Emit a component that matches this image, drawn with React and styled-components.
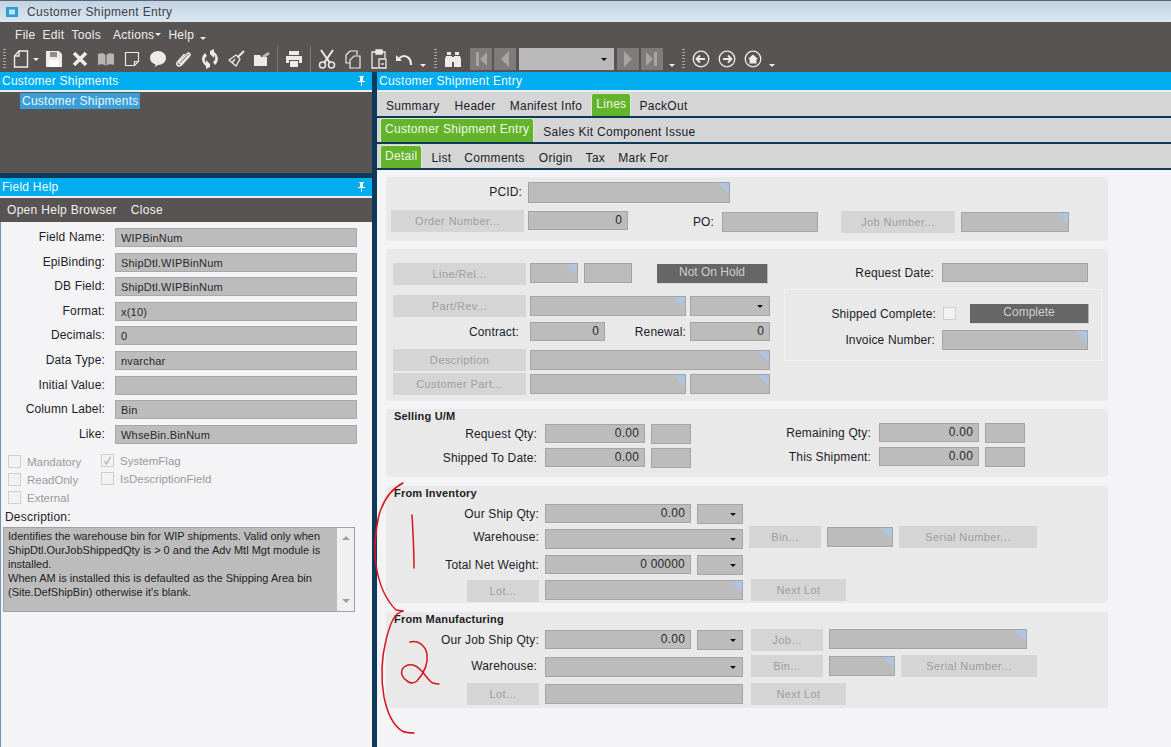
import React from 'react';
import styled, {createGlobalStyle} from 'styled-components';

const GlobalStyle = createGlobalStyle`
  html, body {
    margin: 0;
    padding: 0;
    background: #f4f4f6;
  }
  * {
    box-sizing: border-box;
  }
`;

const Page = styled.div`
  position: relative;
  width: 1171px;
  height: 747px;
  overflow: hidden;
  font-family: "Liberation Sans", Arial, sans-serif;
  font-size: 12px;
  color: #1c1c28;
  background: #f4f4f6;
`;

const TitleBar = styled.div`
  height: 22px;
  display: flex;
  align-items: center;
  gap: 9px;
  padding-left: 6px;
  border-top: 1px solid #5c6670;
  background: linear-gradient(180deg, #c2d2e2 0%, #dce6ef 100%);
  color: #3c4048;
  font-size: 12px;
  letter-spacing: 0.35px;
`;

const MenuBand = styled.div`
  height: 50px;
  background: #585453;
  color: #eeeeee;
`;

const MenuRow = styled.div`
  height: 24px;
  display: flex;
  align-items: center;
  padding-top: 1px;
  letter-spacing: 0.3px;
`;

const MenuItem = styled.span`
  margin-left: ${p => p.$ml}px;
`;

const ToolRow = styled.div`
  height: 26px;
  display: flex;
  align-items: flex-start;
`;

const Slot = styled.div`
  width: ${p => p.$w}px;
  height: 24px;
  margin-top: 1px;
  flex: none;
  display: flex;
  align-items: center;
  justify-content: center;
`;

const Grip = styled.div`
  width: 3px;
  height: 20px;
  background: repeating-linear-gradient(180deg, #a9a7a6 0 1px, transparent 1px 3px);
`;

const Sep = styled.div`
  width: 1px;
  height: 26px;
  margin-left: ${p => p.$ml || 0}px;
  margin-right: ${p => p.$mr || 0}px;
  flex: none;
  background: #7c7978;
`;

const NavBox = styled.div`
  width: 22px;
  height: 22px;
  margin-left: ${p => p.$ml}px;
  margin-top: 2px;
  flex: none;
  display: flex;
  align-items: center;
  justify-content: center;
  background: #7e7b7a;
`;

const NavCombo = styled.div`
  width: 95px;
  height: 22px;
  margin-left: 3px;
  margin-top: 2px;
  flex: none;
  display: flex;
  align-items: center;
  justify-content: flex-end;
  padding-right: 7px;
  background: #b9b9b9;
`;

const Caret = styled.i`
  display: block;
  width: 0;
  height: 0;
  border-left: 3px solid transparent;
  border-right: 3px solid transparent;
  border-top: 3px solid ${p => p.$c || '#111'};
`;

const LowCaret = styled(Caret)`
  margin-top: ${p => p.$mt || 0}px;
`;

const Main = styled.div`
  display: flex;
  height: 675px;
  background: #0e3a5a;
`;

const LeftColumn = styled.div`
  width: 372px;
  flex: none;
  display: flex;
  flex-direction: column;
`;

const RightColumn = styled.div`
  width: 794px;
  margin-left: 5px;
  flex: none;
  display: flex;
  flex-direction: column;
`;

const DockHeader = styled.div`
  height: 18px;
  flex: none;
  display: flex;
  align-items: center;
  justify-content: space-between;
  padding: 0 6px 0 2px;
  background: #00adef;
  color: #f2fbff;
  font-size: 12px;
  letter-spacing: 0.25px;
`;

const WhiteLine = styled.div`
  height: 2px;
  flex: none;
  background: #ececec;
`;

const TreePane = styled.div`
  height: 81px;
  flex: none;
  padding: 1px 0 0 20px;
  background: #585453;
  margin-bottom: 5px;
`;

const TreeSelected = styled.span`
  display: inline-block;
  height: 16px;
  line-height: 16px;
  padding: 0 1px 0 2px;
  background: #3a9fd8;
  color: #e9f5fb;
  letter-spacing: 0.25px;
`;

const HelpMenu = styled.div`
  height: 24px;
  flex: none;
  display: flex;
  align-items: center;
  gap: 14px;
  padding-left: 7px;
  background: #585453;
  color: #f0f0f0;
  letter-spacing: 0.3px;
`;

const HelpBody = styled.div`
  flex: 1;
  padding: 6px 0 0 0;
  background: #f4f4f6;
  border-left: 1px solid #6f93b5;
`;

const HelpGrid = styled.div`
  display: grid;
  grid-template-columns: 104px 242px;
  column-gap: 10px;
  row-gap: 5.6px;
  align-items: center;
`;

const HelpLabel = styled.div`
  text-align: right;
  line-height: 19px;
  letter-spacing: 0.15px;
`;

const HelpValue = styled.div`
  height: 19px;
  line-height: 19px;
  padding-left: 5px;
  background: #bcbcbc;
  border: 1px solid #a8a8a8;
  font-size: 11px;
  color: #2a2a2a;
  letter-spacing: 0.2px;
`;

const FlagGrid = styled.div`
  display: grid;
  grid-template-columns: 93px 1fr;
  grid-auto-rows: 18px;
  width: 300px;
  margin: 9px 0 0 7px;
`;

const Flag = styled.div`
  display: flex;
  align-items: center;
  gap: 6px;
  font-size: 11.5px;
  color: #9a9a9a;
  transform: translateY(${p => p.$up ? -1 : 0}px);
`;

const Box = styled.span`
  width: 13px;
  height: 13px;
  flex: none;
  display: flex;
  align-items: center;
  justify-content: center;
  border: 1px solid #cfcfcf;
  background: #f2f2f2;
  margin-left: ${p => p.$ml || 0}px;
  margin-top: ${p => p.$mt || 0}px;
`;

const DescLabel = styled.div`
  margin: 2px 0 0 4px;
  line-height: 16px;
  letter-spacing: 0.2px;
`;

const DescBox = styled.div`
  width: 352px;
  height: 85px;
  margin: 2px 0 0 2px;
  display: flex;
  background: #bcbcbc;
  border: 1px solid #a0a0a0;
`;

const DescText = styled.div`
  flex: 1;
  padding: 1px 0 0 4px;
  font-size: 11px;
  line-height: 14px;
  color: #222;
  white-space: nowrap;
`;

const ScrollTrack = styled.div`
  width: 17px;
  flex: none;
  display: flex;
  flex-direction: column;
  justify-content: space-between;
  align-items: center;
  padding: 8px 0;
  background: #f0f0f0;
`;

const ScrollUp = styled.i`
  display: block;
  width: 0;
  height: 0;
  border-left: 4px solid transparent;
  border-right: 4px solid transparent;
  border-bottom: 4px solid #a0a0a0;
`;

const ScrollDown = styled.i`
  display: block;
  width: 0;
  height: 0;
  border-left: 4px solid transparent;
  border-right: 4px solid transparent;
  border-top: 4px solid #a0a0a0;
`;

const TabRow = styled.div`
  height: ${p => p.$h}px;
  flex: none;
  display: flex;
  align-items: flex-end;
  margin-bottom: 2px;
  padding-left: 3px;
  background: #d5d5d5;
  letter-spacing: 0.3px;
`;

const Tab = styled.div`
  margin-left: ${p => p.$ml || 0}px;
  height: ${p => p.$h || 22}px;
  line-height: ${p => p.$active ? 20 : 24}px;
  padding: 0 ${p => p.$active ? 4 : 0}px;
  ${p => p.$active && `
    background: #63b32c;
    color: #eef8e6;
    border: 1px solid #d8ecc8;
    border-bottom: 0;
    border-radius: 3px 3px 0 0;
  `}
`;

const FormArea = styled.div`
  flex: 1;
  padding: 7px 0 0 9px;
  background: #f4f4f6;
  display: flex;
  flex-direction: column;
`;

const Panel = styled.div`
  width: 722px;
  height: ${p => p.$h}px;
  margin-bottom: ${p => p.$mb}px;
  flex: none;
  padding-top: ${p => p.$pt || 0}px;
  border-radius: 4px;
  background: #e9e9e9;
`;

const PanelTitle = styled.div`
  height: ${p => p.$h || 14}px;
  line-height: 14px;
  padding-left: 8px;
  font-size: 11px;
  font-weight: bold;
  color: #222;
  letter-spacing: 0.2px;
`;

const Row = styled.div`
  display: flex;
  align-items: flex-start;
  margin-top: ${p => p.$mt || 0}px;
  padding-left: ${p => p.$pl || 0}px;
`;

const Split = styled.div`
  display: flex;
  align-items: flex-start;
`;

const Stack = styled.div`
  display: flex;
  flex-direction: column;
  width: ${p => p.$w}px;
  flex: none;
  margin-left: ${p => p.$ml || 0}px;
`;

const Label = styled.div`
  width: ${p => p.$w}px;
  margin-top: ${p => p.$mt || 0}px;
  flex: none;
  text-align: right;
  line-height: 20px;
  letter-spacing: 0.15px;
  white-space: nowrap;
`;

const Field = styled.div`
  width: ${p => p.$w}px;
  height: ${p => p.$h || 20}px;
  margin-left: ${p => p.$ml || 0}px;
  margin-top: ${p => p.$mt || 0}px;
  padding-right: 5px;
  flex: none;
  text-align: right;
  line-height: ${p => (p.$h || 20) - 3}px;
  color: #2a2a2a;
  letter-spacing: 0.2px;
  border: 1px solid #a4a4a4;
  background: ${p => p.$corner
    ? 'linear-gradient(225deg, #afc4e0 8px, #bcbcbc 8px)'
    : '#bcbcbc'};
`;

const Select = styled.div`
  width: ${p => p.$w}px;
  height: 20px;
  margin-left: ${p => p.$ml || 0}px;
  margin-top: ${p => p.$mt || 0}px;
  padding-right: 6px;
  flex: none;
  display: flex;
  align-items: center;
  justify-content: flex-end;
  border: 1px solid #a4a4a4;
  background: #bcbcbc;
`;

const Btn = styled.div`
  width: ${p => p.$w}px;
  height: 22px;
  margin-left: ${p => p.$ml || 0}px;
  margin-top: ${p => p.$mt || 0}px;
  flex: none;
  text-align: center;
  line-height: 22px;
  font-size: 11px;
  letter-spacing: 0.4px;
  color: #9d9d9d;
  background: #d5d5d5;
  white-space: nowrap;
`;

const DarkBtn = styled.div`
  width: ${p => p.$w}px;
  height: 20px;
  margin-left: ${p => p.$ml || 0}px;
  margin-top: ${p => p.$mt || 0}px;
  flex: none;
  text-align: center;
  line-height: 17px;
  color: #cfcfcf;
  background: #666666;
  border-right: 1px solid #b5b5b5;
  border-bottom: 1px solid #d8d8d8;
`;

const GroupBox = styled.div`
  width: 318px;
  height: 72px;
  margin-top: 6px;
  padding-top: 14px;
  border: 1px solid #f3f3f3;
`;

const Scribble = styled.svg`
  position: absolute;
  left: 0;
  top: 0;
  pointer-events: none;
`;

const ink = '#ecebea';

const Doc = () => (
  <svg width="16" height="20" viewBox="0 0 16 20" fill="none" stroke={ink} strokeWidth="1.4">
    <path d="M6 2h8.5v16h-13V7z"/><path d="M6 2v5H1.500"/>
  </svg>
);
const Save = () => (
  <svg width="18" height="18" viewBox="0 0 18 18" fill={ink}>
    <path d="M1 1h13l3 3v13H1z"/><path d="M5 2h7v5H5z" fill="#8f8c8b"/><path d="M4 10h10v7H4z" fill="#fff"/>
  </svg>
);
const Cross = () => (
  <svg width="16" height="16" viewBox="0 0 16 16" stroke={ink} strokeWidth="3.600">
    <path d="M2 2l12 12M14 2L2 14"/>
  </svg>
);
const Book = () => (
  <svg width="18" height="16" viewBox="0 0 18 16" fill="#b7b5b4">
    <path d="M1 3c3-1 6-1 7.500 1v11C7 13 4 13 1 14zM17 3c-3-1-6-1-7.500 1v11c1.500-2 4.500-2 7.500-1z"/>
  </svg>
);
const Note = () => (
  <svg width="16" height="16" viewBox="0 0 16 16" fill="none" stroke={ink} strokeWidth="1.200">
    <path d="M1.500 1.500h13v9l-4 4h-9z"/><path d="M10.500 14.500v-4h4"/>
  </svg>
);
const Bubble = () => (
  <svg width="18" height="18" viewBox="0 0 18 18" fill={ink}>
    <path d="M9 1c4.500 0 8 3 8 7s-3.500 7-8 7l-3 2 .5-2.600C3 13.300 1 11 1 8c0-4 3.500-7 8-7z"/>
  </svg>
);
const Clip = () => (
  <svg width="18" height="18" viewBox="0 0 18 18" fill="none" stroke={ink} strokeWidth="1.500">
    <path d="M14 5l-8 8.500c-1 1-2.500-.5-1.500-1.500L12 4c2-2 4 0 2.500 2l-8 9c-3 2.500-6-.5-4-3l7-8"/>
  </svg>
);
const Sync = () => (
  <svg width="18" height="20" viewBox="0 0 18 20" fill={ink}>
    <path d="M9 2l4-2v3a8 8 0 0 1 1 13l-2-3a4.500 4.500 0 0 0 1-7v3L9 5z"/>
    <path d="M9 18l-4 2v-3a8 8 0 0 1-1-13l2 3a4.500 4.500 0 0 0-1 7v-3l4 4z"/>
  </svg>
);
const Broom = () => (
  <svg width="18" height="18" viewBox="0 0 18 18" fill="none" stroke={ink} strokeWidth="1.300">
    <path d="M17 1l-6 6" strokeWidth="2"/><path d="M9 5l4 4-4 7-7-6z"/><path d="M5 13l3-4"/>
  </svg>
);
const FolderTool = () => (
  <svg width="18" height="16" viewBox="0 0 18 16" fill={ink}>
    <path d="M1 4h6l1 2h6v9H1z"/><path d="M9 5l6-4 2 2-6 4z" fill="#bdbbba"/>
  </svg>
);
const Printer = () => (
  <svg width="18" height="16" viewBox="0 0 18 16" fill={ink}>
    <path d="M4 0h10v4H4z"/><path d="M1 5h16v7h-3V9H4v3H1z"/><path d="M5 10h8v6H5z"/>
  </svg>
);
const Scissors = () => (
  <svg width="18" height="20" viewBox="0 0 18 20" fill="none" stroke={ink} strokeWidth="1.500">
    <path d="M3 1l9 13M15 1L6 14" strokeWidth="2"/><circle cx="4.500" cy="16" r="3"/><circle cx="13.500" cy="16" r="3"/>
  </svg>
);
const Copy = () => (
  <svg width="16" height="19" viewBox="0 0 16 19" fill="none" stroke={ink} strokeWidth="1.200">
    <path d="M5 1h7v4M5 1L1 5v8h4"/><path d="M9 6h6v12H5V10z"/>
  </svg>
);
const Paste = () => (
  <svg width="16" height="20" viewBox="0 0 16 20" fill="none" stroke={ink} strokeWidth="1.300">
    <path d="M5 3H1v16h6M11 3h3v6"/><path d="M5 1h6v4H5z" fill={ink}/><path d="M8 10h7v9H8z"/><path d="M10 15h3" />
  </svg>
);
const Undo = () => (
  <svg width="18" height="14" viewBox="0 0 18 14" fill="none" stroke={ink} strokeWidth="2.200">
    <path d="M16 13c0-6-3-9-7-9-2 0-3.500 1-5 2.500"/><path d="M1 3v6h6z" fill={ink} stroke="none"/>
  </svg>
);
const Binoculars = () => (
  <svg width="18" height="17" viewBox="0 0 18 17" fill={ink}>
    <path d="M3 1h4v3H3zM11 1h4v3h-4z"/><path d="M2 5h6v11H1V8zM10 5h6l1 3v8h-7z"/><path d="M8 6h2v5H8z"/>
  </svg>
);
const NavGlyph = ({d}) => (
  <svg width="14" height="16" viewBox="0 0 14 16" fill="#a7a5a4"><path d={d}/></svg>
);
const Circled = ({children}) => (
  <svg width="18" height="18" viewBox="0 0 18 18" fill="none" stroke={ink} strokeWidth="1.300">
    <circle cx="9" cy="9" r="7.800"/>{children}
  </svg>
);
const Check = () => (
  <svg width="11" height="11" viewBox="0 0 11 11" fill="none" stroke="#b0b0b0" strokeWidth="1.300">
    <path d="M2.500 6l2 3 4-7"/>
  </svg>
);
const Pin = () => (
  <svg width="9" height="10" viewBox="0 0 9 10" fill="#f2fbff">
    <path d="M2 0h5v1H6v4h2v1H5v4H4V6H1V5h2V1H2z"/>
  </svg>
);
const AppIcon = () => (
  <svg width="12" height="12" viewBox="0 0 12 12">
    <path d="M0 1h12v10H0z" fill="#2d9bd8"/><path d="M3 3.500h6v5H3z" fill="#bfe3f6"/>
  </svg>
);

const helpFields = [
  ['Field Name:', 'WIPBinNum'],
  ['EpiBinding:', 'ShipDtl.WIPBinNum'],
  ['DB Field:', 'ShipDtl.WIPBinNum'],
  ['Format:', 'x(10)'],
  ['Decimals:', '0'],
  ['Data Type:', 'nvarchar'],
  ['Initial Value:', ''],
  ['Column Label:', 'Bin'],
  ['Like:', 'WhseBin.BinNum'],
];

const App = () => {
  return (
    <Page>
      <GlobalStyle/>
      <TitleBar><AppIcon/>Customer Shipment Entry</TitleBar>
      <MenuBand>
        <MenuRow>
          <MenuItem $ml={15}>File</MenuItem>
          <MenuItem $ml={7}>Edit</MenuItem>
          <MenuItem $ml={7}>Tools</MenuItem>
          <MenuItem $ml={12}>Actions</MenuItem>
          <MenuItem $ml={1}><Caret $c="#eee"/></MenuItem>
          <MenuItem $ml={7}>Help</MenuItem>
          <MenuItem $ml={6}><LowCaret $c="#eee" $mt={8}/></MenuItem>
        </MenuRow>
        <ToolRow>
          <Slot $w={9}><Grip/></Slot>
          <Slot $w={23}><Doc/></Slot>
          <Slot $w={8}><Caret $c="#eee"/></Slot>
          <Slot $w={28}><Save/></Slot>
          <Slot $w={24}><Cross/></Slot>
          <Slot $w={28}><Book/></Slot>
          <Slot $w={24}><Note/></Slot>
          <Slot $w={28}><Bubble/></Slot>
          <Slot $w={24}><Clip/></Slot>
          <Slot $w={28}><Sync/></Slot>
          <Slot $w={24}><Broom/></Slot>
          <Slot $w={28}><FolderTool/></Slot>
          <Sep $ml={1}/>
          <Slot $w={32}><Printer/></Slot>
          <Sep/>
          <Slot $w={31}><Scissors/></Slot>
          <Slot $w={22}><Copy/></Slot>
          <Slot $w={30}><Paste/></Slot>
          <Slot $w={20}><Undo/></Slot>
          <Slot $w={18}><LowCaret $c="#eee" $mt={13}/></Slot>
          <Slot $w={6}><Grip/></Slot>
          <Slot $w={30}><Binoculars/></Slot>
          <NavBox $ml={2}><NavGlyph d="M2 1h3v14H2zM13 1v14L6 8z"/></NavBox>
          <NavBox $ml={2}><NavGlyph d="M11 0v16L3 8z"/></NavBox>
          <NavCombo><Caret/></NavCombo>
          <NavBox $ml={3}><NavGlyph d="M3 0v16l8-8z"/></NavBox>
          <NavBox $ml={2}><NavGlyph d="M12 1H9v14h3zM1 1v14l7-7z"/></NavBox>
          <Slot $w={17}><LowCaret $c="#eee" $mt={13}/></Slot>
          <Slot $w={6}><Grip/></Slot>
          <Slot $w={30}><Circled><path d="M13 9H5M8 5.500L4.500 9 8 12.500" strokeWidth="1.800"/></Circled></Slot>
          <Slot $w={22}><Circled><path d="M5 9h8M10 5.500L13.500 9 10 12.500" strokeWidth="1.800"/></Circled></Slot>
          <Slot $w={30}><Circled><path d="M9 4.500L4 9h1.500v4.500h7V9H14z" fill={ink} stroke="none"/></Circled></Slot>
          <Slot $w={8}><LowCaret $c="#eee" $mt={13}/></Slot>
        </ToolRow>
      </MenuBand>
      <Main>
        <LeftColumn>
          <DockHeader>Customer Shipments<Pin/></DockHeader>
          <WhiteLine/>
          <TreePane><TreeSelected>Customer Shipments</TreeSelected></TreePane>
          <DockHeader>Field Help<Pin/></DockHeader>
          <WhiteLine/>
          <HelpMenu><span>Open Help Browser</span><span>Close</span></HelpMenu>
          <HelpBody>
            <HelpGrid>
              {helpFields.map(([label, value]) => (
                <React.Fragment key={label}>
                  <HelpLabel>{label}</HelpLabel>
                  <HelpValue>{value}</HelpValue>
                </React.Fragment>
              ))}
            </HelpGrid>
            <FlagGrid>
              <Flag><Box/>Mandatory</Flag>
              <Flag $up><Box><Check/></Box>SystemFlag</Flag>
              <Flag><Box/>ReadOnly</Flag>
              <Flag $up><Box/>IsDescriptionField</Flag>
              <Flag><Box/>External</Flag>
            </FlagGrid>
            <DescLabel>Description:</DescLabel>
            <DescBox>
              <DescText>
                Identifies the warehouse bin for WIP shipments. Valid only when<br/>
                ShipDtl.OurJobShippedQty is &gt; 0 and the Adv Mtl Mgt module is<br/>
                installed.<br/>
                When AM is installed this is defaulted as the Shipping Area bin<br/>
                (Site.DefShipBin) otherwise it's blank.
              </DescText>
              <ScrollTrack><ScrollUp/><ScrollDown/></ScrollTrack>
            </DescBox>
          </HelpBody>
        </LeftColumn>
        <RightColumn>
          <DockHeader>Customer Shipment Entry</DockHeader>
          <WhiteLine/>
          <TabRow $h={24}>
            <Tab $ml={6}>Summary</Tab>
            <Tab $ml={15}>Header</Tab>
            <Tab $ml={14}>Manifest Info</Tab>
            <Tab $ml={9} $active $h={23}>Lines</Tab>
            <Tab $ml={8}>PackOut</Tab>
          </TabRow>
          <TabRow $h={24}>
            <Tab $active $h={24}>Customer Shipment Entry</Tab>
            <Tab $ml={9}>Sales Kit Component Issue</Tab>
          </TabRow>
          <TabRow $h={24}>
            <Tab $active $h={23}>Detail</Tab>
            <Tab $ml={9}>List</Tab>
            <Tab $ml={13}>Comments</Tab>
            <Tab $ml={14}>Origin</Tab>
            <Tab $ml={13}>Tax</Tab>
            <Tab $ml={13}>Mark For</Tab>
          </TabRow>
          <FormArea>
            <Panel $h={64} $mb={8} $pt={5}>
              <Row>
                <Label $w={136}>PCID:</Label>
                <Field $w={202} $h={21} $ml={6} $corner/>
              </Row>
              <Row $mt={7} $pl={5}>
                <Btn $w={133}>Order Number...</Btn>
                <Field $w={100} $h={19} $ml={4} $mt={1}>0</Field>
                <Label $w={86} $mt={2}>PO:</Label>
                <Field $w={96} $ml={8} $mt={2}/>
                <Btn $w={114} $ml={23} $mt={1}>Job Number...</Btn>
                <Field $w={108} $ml={6} $mt={2} $corner/>
              </Row>
            </Panel>

            <Panel $h={152} $mb={8} $pt={14}>
              <Split>
                <Stack $w={384}>
                  <Row $pl={7}>
                    <Btn $w={133}>Line/Rel...</Btn>
                    <Field $w={48} $ml={4} $corner/>
                    <Field $w={48} $ml={6}/>
                    <DarkBtn $w={111} $ml={25} $mt={1}>Not On Hold</DarkBtn>
                  </Row>
                  <Row $mt={10} $pl={7}>
                    <Btn $w={133}>Part/Rev...</Btn>
                    <Field $w={156} $ml={4} $mt={1} $corner/>
                    <Select $w={80} $ml={4} $mt={1}><Caret/></Select>
                  </Row>
                  <Row $mt={5} $pl={7}>
                    <Label $w={126}>Contract:</Label>
                    <Field $w={75} $h={19} $ml={11}>0</Field>
                    <Label $w={81}>Renewal:</Label>
                    <Field $w={80} $h={19} $ml={4}>0</Field>
                  </Row>
                  <Row $mt={7} $pl={7}>
                    <Btn $w={133}>Description</Btn>
                    <Field $w={240} $ml={4} $mt={1} $corner/>
                  </Row>
                  <Row $mt={2} $pl={7}>
                    <Btn $w={133}>Customer Part...</Btn>
                    <Field $w={156} $ml={4} $mt={1} $corner/>
                    <Field $w={80} $ml={4} $mt={1} $corner/>
                  </Row>
                </Stack>
                <Stack $w={318} $ml={14}>
                  <Row>
                    <Label $w={150}>Request Date:</Label>
                    <Field $w={146} $h={19} $ml={8}/>
                  </Row>
                  <GroupBox>
                    <Row>
                      <Label $w={151}>Shipped Complete:</Label>
                      <Box $ml={7} $mt={3}/>
                      <DarkBtn $w={119} $ml={14}>Complete</DarkBtn>
                    </Row>
                    <Row $mt={6}>
                      <Label $w={150}>Invoice Number:</Label>
                      <Field $w={146} $ml={7} $corner/>
                    </Row>
                  </GroupBox>
                </Stack>
              </Split>
            </Panel>

            <Panel $h={68} $mb={9}>
              <PanelTitle>Selling U/M</PanelTitle>
              <Row>
                <Label $w={151} $mt={1}>Request Qty:</Label>
                <Field $w={100} $h={19} $ml={8} $mt={1}>0.00</Field>
                <Field $w={40} $ml={6} $mt={1}/>
                <Label $w={180}>Remaining Qty:</Label>
                <Field $w={100} $h={19} $ml={8}>0.00</Field>
                <Field $w={40} $ml={6}/>
              </Row>
              <Row $mt={3}>
                <Label $w={151} $mt={1}>Shipped To Date:</Label>
                <Field $w={100} $h={19} $ml={8} $mt={1}>0.00</Field>
                <Field $w={40} $ml={6} $mt={1}/>
                <Label $w={180}>This Shipment:</Label>
                <Field $w={100} $h={19} $ml={8}>0.00</Field>
                <Field $w={40} $ml={6}/>
              </Row>
            </Panel>

            <Panel $h={117} $mb={9}>
              <PanelTitle>From Inventory</PanelTitle>
              <Row $mt={4}>
                <Label $w={153}>Our Ship Qty:</Label>
                <Field $w={146} $h={19} $ml={6}>0.00</Field>
                <Select $w={46} $ml={6}><Caret/></Select>
              </Row>
              <Row $mt={2}>
                <Label $w={153} $mt={1}>Warehouse:</Label>
                <Select $w={198} $ml={6} $mt={3}><Caret/></Select>
                <Btn $w={72} $ml={6}>Bin...</Btn>
                <Field $w={66} $ml={6} $mt={1} $corner/>
                <Btn $w={138} $ml={6}>Serial Number...</Btn>
              </Row>
              <Row $mt={6}>
                <Label $w={153}>Total Net Weight:</Label>
                <Field $w={146} $h={19} $ml={6}>0 00000</Field>
                <Select $w={46} $ml={6}><Caret/></Select>
              </Row>
              <Row $mt={4} $pl={81}>
                <Btn $w={72} $mt={1}>Lot...</Btn>
                <Field $w={198} $ml={6} $mt={1} $corner/>
                <Btn $w={95} $ml={8}>Next Lot</Btn>
              </Row>
            </Panel>

            <Panel $h={96} $mb={0}>
              <PanelTitle>From Manufacturing</PanelTitle>
              <Row $mt={3}>
                <Label $w={153} $mt={1}>Our Job Ship Qty:</Label>
                <Field $w={146} $h={19} $ml={6} $mt={1}>0.00</Field>
                <Select $w={46} $ml={6} $mt={1}><Caret/></Select>
                <Btn $w={72} $ml={8}>Job...</Btn>
                <Field $w={198} $ml={6} $corner/>
              </Row>
              <Row $mt={4}>
                <Label $w={151} $mt={1}>Warehouse:</Label>
                <Select $w={198} $ml={8} $mt={2}><Caret/></Select>
                <Btn $w={72} $ml={8}>Bin...</Btn>
                <Field $w={66} $ml={6} $mt={1} $corner/>
                <Btn $w={136} $ml={6}>Serial Number...</Btn>
              </Row>
              <Row $mt={6} $pl={81}>
                <Btn $w={72}>Lot...</Btn>
                <Field $w={198} $ml={6} $mt={1}/>
                <Btn $w={95} $ml={8}>Next Lot</Btn>
              </Row>
            </Panel>
          </FormArea>
        </RightColumn>
      </Main>
      <Scribble width="1171" height="747" viewBox="0 0 1171 747" fill="none" stroke="#d6161c" strokeWidth="1.500" strokeLinecap="round" strokeLinejoin="round">
        <path d="M403 483C393 488 384 498 379 515C375 532 374 552 376 565C379 585 386 600 396 610L403 611"/>
        <path d="M403 611C394 613 390 624 386 640C381 660 381 680 384 697C387 712 393 725 402 731C406 733 410 733 414 733"/>
        <path d="M412 515C413 532 414 550 414 568"/>
        <path d="M410 642C418 640 425 645 427 654C428 662 425 672 417 681C411 686 404 680 402 675C400 668 406 664 413 665C420 666 425 676 430 681C433 684 436 684 439 684"/>
      </Scribble>
    </Page>
  );
};

export default App;
